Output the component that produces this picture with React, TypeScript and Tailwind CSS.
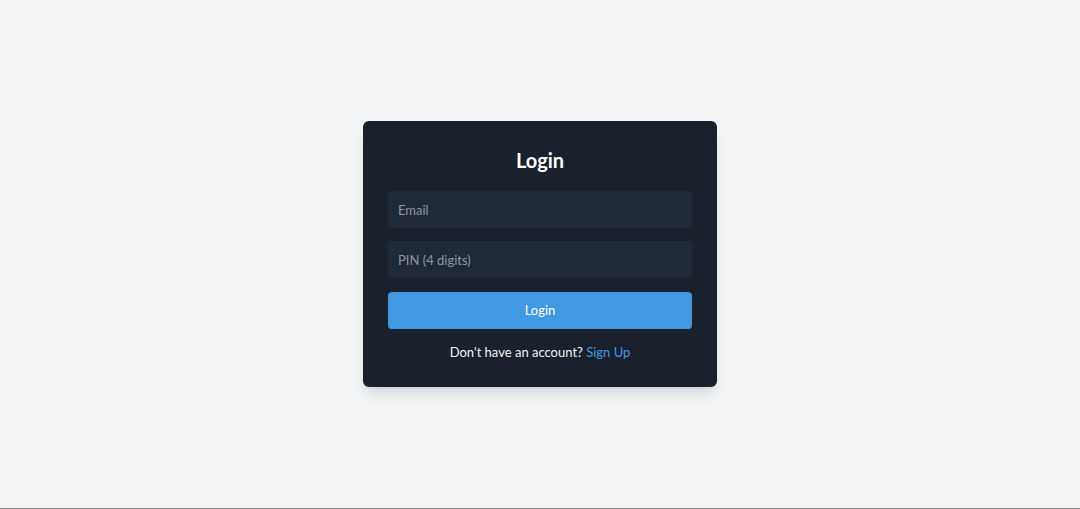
import React from "react";

export default function App() {
  return (
    <div
      className="h-[509px] w-full bg-[#f3f4f6] border-b border-[#8a8a8a] flex items-center justify-center"
      style={{ fontFamily: 'Lato, "Noto Sans", sans-serif' }}
    >
      <div className="w-[354px] bg-[#1a202c] rounded-md shadow-lg p-[25px] flex flex-col">
        <h1 className="text-white text-[20px] font-bold text-center leading-[28px] mb-[17px]">Login</h1>
        <input
          type="email"
          placeholder="Email"
          className="h-[37px] w-full rounded bg-[#202938] px-[10px] text-[13px] text-white placeholder:text-[#8e96a3] outline-none mb-[13px]"
        />
        <input
          type="password"
          placeholder="PIN (4 digits)"
          className="h-[37px] w-full rounded bg-[#202938] px-[10px] text-[13px] text-white placeholder:text-[#8e96a3] outline-none mb-[14px]"
        />
        <button className="h-[37px] w-full rounded bg-[#4299e1] text-white text-[13px]">Login</button>
        <p className="mt-[13px] text-center text-[13px] leading-[20px] text-[#f3f4f6]">
          Don't have an account? <a className="text-[#4299e1] cursor-pointer">Sign Up</a>
        </p>
      </div>
    </div>
  );
}
